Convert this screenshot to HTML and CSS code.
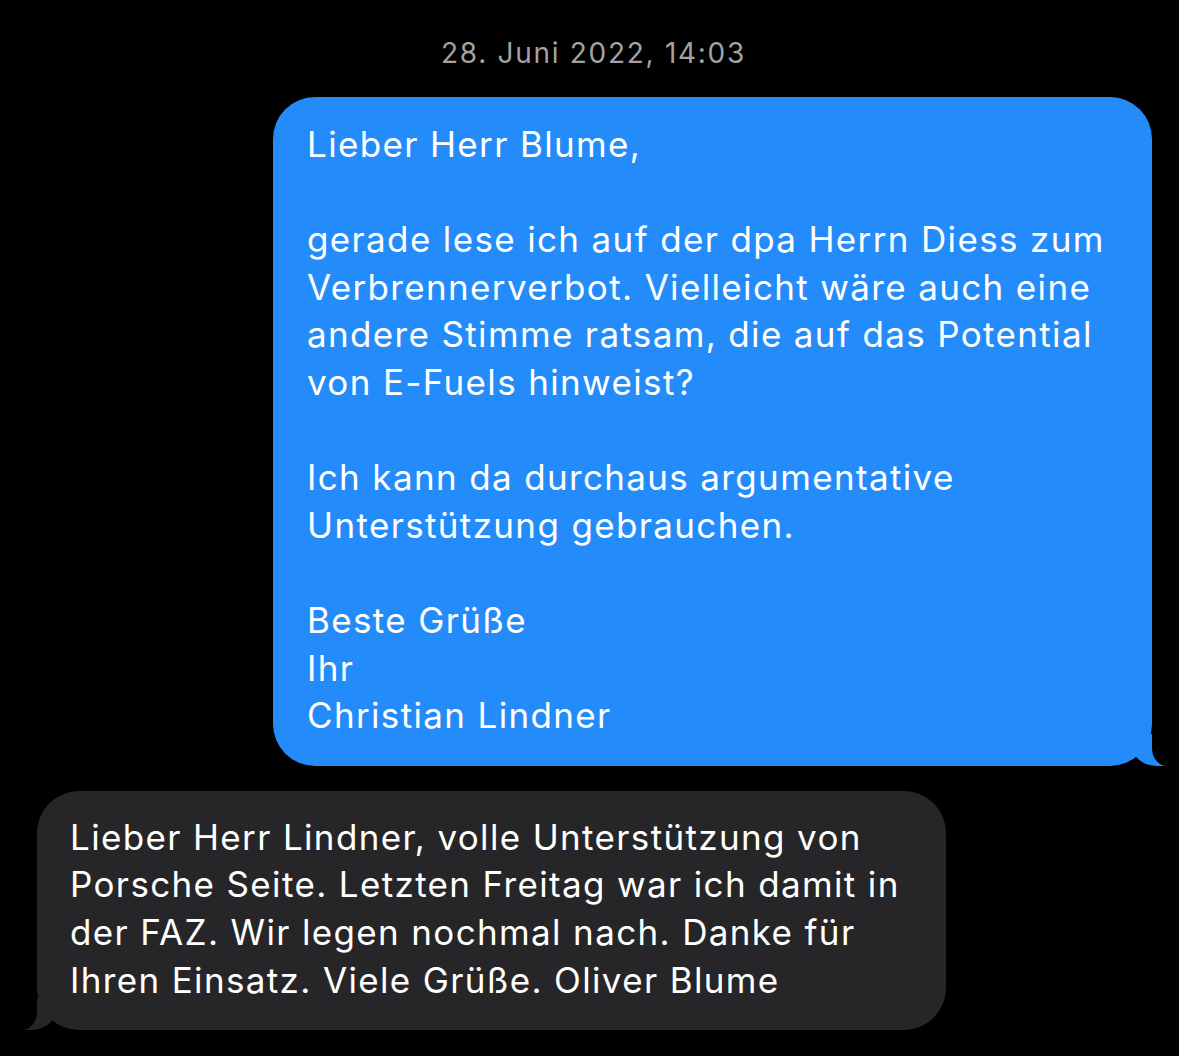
FILE: index.html
```html
<!DOCTYPE html>
<html lang="de">
<head>
    <meta charset="UTF-8">
    <meta name="viewport" content="width=device-width, initial-scale=1.0">
    <title>Nachrichten</title>
    <link rel="stylesheet" href="styles.css">
</head>
<body>
    <div class="chat">
        <div class="timestamp">28. Juni 2022, 14:03</div>

        <div class="bubble sent">
            <p>Lieber Herr Blume,</p>
            <p>gerade lese ich auf der dpa Herrn Diess zum Verbrennerverbot. Vielleicht wäre auch eine andere Stimme ratsam, die auf das Potential von E-Fuels hinweist?</p>
            <p>Ich kann da durchaus argumentative Unterstützung gebrauchen.</p>
            <p>Beste Grüße<br>Ihr<br>Christian Lindner</p>
        </div>

        <div class="bubble received">
            <p>Lieber Herr Lindner, volle Unterstützung von Porsche Seite. Letzten Freitag war ich damit in der FAZ. Wir legen nochmal nach. Danke für Ihren Einsatz. Viele Grüße. Oliver Blume</p>
        </div>
    </div>
</body>
</html>
```

FILE: styles.css
```css
body {
    margin: 0;
    padding: 0;
    background-color: #000;
    font-family: 'Inter', 'Roboto', sans-serif;
    -webkit-font-smoothing: antialiased;
}
.chat {
    display: flex;
    flex-direction: column;
    padding: 36px 27px 0 37px;
    height: 1056px;
    box-sizing: border-box;
}
.timestamp {
    text-align: center;
    color: #a2a2a2;
    font-size: 28px;
    letter-spacing: 1.7px;
    margin-left: -2px;
    margin-bottom: 27px;
}
.bubble {
    position: relative;
    color: #fff;
    font-size: 35px;
    letter-spacing: 1.35px;
    line-height: 47.6px;
    border-radius: 42px;
}
.bubble p {
    margin: 0 0 47.6px;
}
.bubble p:last-child {
    margin-bottom: 0;
}
.sent {
    align-self: flex-end;
    width: 879px;
    box-sizing: border-box;
    background-color: #248cfa;
    padding: 24px 30px 26px 34px;
    margin-bottom: 25px;
}
.received {
    align-self: flex-start;
    width: 909px;
    box-sizing: border-box;
    background-color: #262628;
    padding: 23px 30px 26px 33px;
}

/* tails */
.bubble::before,
.bubble::after {
    content: "";
    position: absolute;
    bottom: 0;
    height: 32px;
}
.sent::before {
    right: -15px;
    width: 36px;
    background-color: #248cfa;
    border-bottom-left-radius: 26px 22px;
}
.sent::after {
    right: -30px;
    width: 30px;
    background-color: #000;
    border-bottom-left-radius: 15px 18px;
}
.received::before {
    left: -16px;
    width: 36px;
    background-color: #262628;
    border-bottom-right-radius: 26px 22px;
}
.received::after {
    left: -30px;
    width: 30px;
    background-color: #000;
    border-bottom-right-radius: 15px 18px;
}
```
